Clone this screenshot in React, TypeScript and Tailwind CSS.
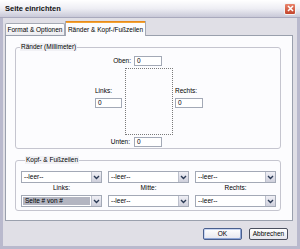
import React from "react";

function Chevron() {
  return (
    <svg width="7" height="5" viewBox="0 0 7 5" className="block">
      <polyline points="1,1 3.5,3.5 6,1" fill="none" stroke="#2b3a55" strokeWidth="1.4" />
    </svg>
  );
}

function Select({ value, active = false }: { value: string; active?: boolean }) {
  return (
    <div className="flex h-[12px] w-[81px] border border-[#a3a9b6] bg-white">
      <div
        className={
          "flex-1 flex items-center pl-[2px] truncate " +
          (active ? "bg-[#b3b5c1] m-[1px] pl-[1px]" : "")
        }
      >
        {value}
      </div>
      <div className="w-[10px] flex items-center justify-center bg-gradient-to-b from-[#f0f0f6] to-[#cfd0dc] border-l border-[#bcc0cc]">
        <Chevron />
      </div>
    </div>
  );
}

function NumInput({ w }: { w: string }) {
  return (
    <div className={"h-[10px] border border-[#a3a9b6] bg-white flex items-center pl-[2px] " + w}>0</div>
  );
}

export default function App() {
  return (
    <div className="w-[300px] h-[249px] flex flex-col overflow-hidden bg-[#e0dfe6] text-[6.5px] leading-[8px] text-black font-['Liberation_Sans',Arial,sans-serif]">
      {/* Title bar */}
      <div className="h-[18px] shrink-0 flex items-center justify-between pl-[5px] pr-[4px] bg-gradient-to-b from-[#ffffff] via-[#eeeef4] to-[#c9c9d8] border-b border-[#a9a9bd]">
        <span className="text-[7.5px] font-bold text-[#111]">Seite einrichten</span>
        <div className="w-[12px] h-[12px] rounded-[2px] border border-[#f4f4f4] bg-gradient-to-b from-[#e9836b] to-[#c3442c] flex items-center justify-center">
          <svg width="7" height="7" viewBox="0 0 7 7">
            <path d="M1 1 L6 6 M6 1 L1 6" stroke="#fff" strokeWidth="1.5" />
          </svg>
        </div>
      </div>

      {/* Body */}
      <div className="flex-1 flex flex-col border-x-[3px] border-b-[3px] border-[#b9b9cd]">
        {/* Tabs */}
        <div className="flex items-end pl-[2px] mt-[3px]">
          <div className="h-[12px] w-[60px] flex items-center justify-center border border-b-0 border-[#a5a9b4] rounded-t-[2px] bg-gradient-to-b from-[#ffffff] to-[#ececf0]">
            Format &amp; Optionen
          </div>
          <div className="relative z-10 -mb-[1px] h-[15px] w-[81px] flex flex-col border-x border-[#a5a9b4] bg-[#fcfcfe]">
            <div className="h-[2px] bg-[#f3a433] border-t border-[#e78a1e]" />
            <div className="flex-1 flex items-center justify-center">R&auml;nder &amp; Kopf-/Fu&szlig;zeilen</div>
          </div>
        </div>

        {/* Panel */}
        <div className="ml-[2px] w-[288px] border border-[#9aa0ad] bg-[#fcfcfe] pl-[9px] pt-[7px] pb-[9px]">
          {/* Ränder group */}
          <fieldset className="w-[266px] border border-[#c5c5cf] rounded-[3px] pt-[5px] pb-[1px] px-0">
            <legend className="ml-[4px] px-[1px] h-[8px] bg-[#f1f1f5]">R&auml;nder (Millimeter)</legend>
            <div className="ml-[79px] w-[67px] flex items-center justify-end gap-[3px]">
              <span>Oben:</span>
              <NumInput w="w-[28px]" />
            </div>
            <div className="ml-[79px] mt-[2px] flex items-start">
              <div className="w-[27px] mt-[19px] flex flex-col gap-[3px]">
                <span>Links:</span>
                <NumInput w="w-[27px]" />
              </div>
              <div className="ml-[3px] w-[48px] h-[67px] border border-dotted border-[#7a7a7a]" />
              <div className="ml-[2px] w-[28px] mt-[19px] flex flex-col gap-[3px]">
                <span>Rechts:</span>
                <NumInput w="w-[28px]" />
              </div>
            </div>
            <div className="ml-[79px] mt-[2px] w-[67px] flex items-center justify-end gap-[4px]">
              <span>Unten:</span>
              <NumInput w="w-[28px]" />
            </div>
          </fieldset>

          {/* Kopf- & Fußzeilen group */}
          <fieldset className="mt-[7px] w-[266px] border border-[#c5c5cf] rounded-[3px] pt-[7px] pb-[3px] pl-[5px] pr-0">
            <legend className="ml-[4px] px-[1px] h-[8px] bg-[#f1f1f5]">Kopf- &amp; Fu&szlig;zeilen</legend>
            <div className="grid grid-cols-[81px_81px_81px] gap-x-[6px]">
              <Select value="--leer--" />
              <Select value="--leer--" />
              <Select value="--leer--" />
              <div className="mt-[1px] h-[8px] text-center">Links:</div>
              <div className="mt-[1px] h-[8px] text-center">Mitte:</div>
              <div className="mt-[1px] h-[8px] text-center">Rechts:</div>
              <div className="mt-[3px]"><Select value="Seite # von #" active /></div>
              <div className="mt-[3px]"><Select value="--leer--" /></div>
              <div className="mt-[3px]"><Select value="--leer--" /></div>
            </div>
          </fieldset>
        </div>

        {/* Buttons */}
        <div className="mt-[7px] pr-[9px] flex justify-end gap-[7px]">
          <button className="w-[39px] h-[12px] rounded-[2px] border border-[#4a5f8e] bg-gradient-to-b from-[#ffffff] to-[#e6e6ee] shadow-[inset_-1px_-1px_0_#8fa6d6,inset_1px_1px_0_#c9d6f2] flex items-center justify-center leading-none">
            OK
          </button>
          <button className="w-[39px] h-[12px] rounded-[2px] border border-[#4a4f5e] bg-gradient-to-b from-[#ffffff] to-[#e6e6ee] flex items-center justify-center leading-none">
            Abbrechen
          </button>
        </div>
      </div>
    </div>
  );
}
